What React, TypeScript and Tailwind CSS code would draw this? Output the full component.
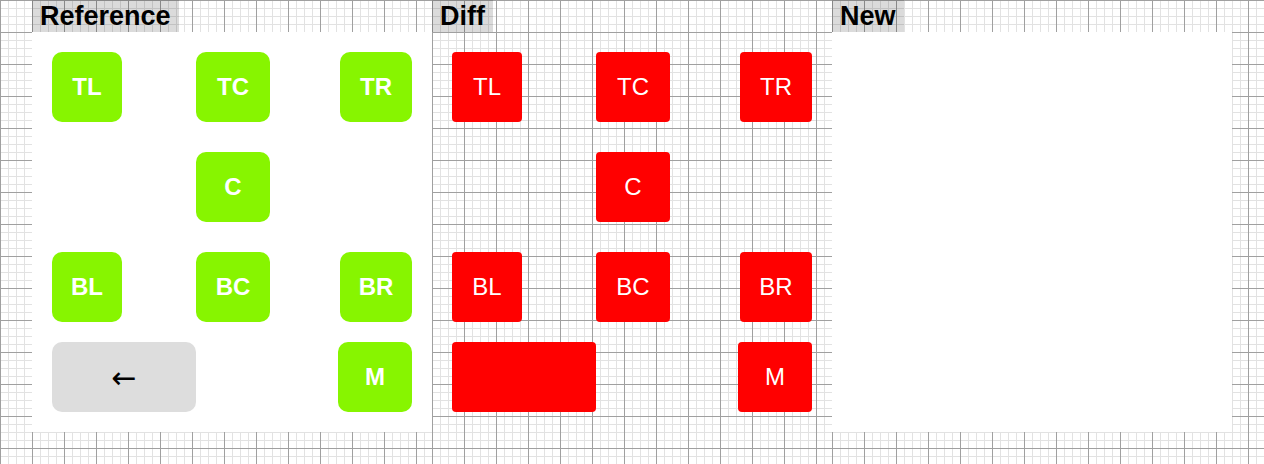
const grid =
  "bg-white bg-[linear-gradient(to_right,#a0a0a0_1px,transparent_1px),linear-gradient(to_bottom,#a0a0a0_1px,transparent_1px),linear-gradient(to_right,#e2e2e2_1px,transparent_1px),linear-gradient(to_bottom,#e2e2e2_1px,transparent_1px)] [background-size:32px_32px,32px_32px,8px_8px,8px_8px]";

type Kind = "ref" | "diff";

function Key({ label, w, ml, kind }: { label: string; w: string; ml?: string; kind: Kind }) {
  const look =
    kind === "ref"
      ? "bg-[#87f500] rounded-[10px] font-bold text-white"
      : "bg-[#ff0000] rounded-[4px] font-normal text-white";
  return (
    <div className={`${w} ${ml ?? ""} ${look} h-[70px] flex items-center justify-center text-[24px] font-['Liberation_Sans',Arial,sans-serif]`}>
      {label}
    </div>
  );
}

function Keypad({ kind }: { kind: Kind }) {
  return (
    <div className="flex flex-col p-[20px]">
      <div className="flex">
        <Key label="TL" w="w-[70px]" kind={kind} />
        <Key label="TC" w="w-[74px]" ml="ml-[74px]" kind={kind} />
        <Key label="TR" w="w-[72px]" ml="ml-[70px]" kind={kind} />
      </div>
      <div className="flex mt-[30px]">
        <Key label="C" w="w-[74px]" ml="ml-[144px]" kind={kind} />
      </div>
      <div className="flex mt-[30px]">
        <Key label="BL" w="w-[70px]" kind={kind} />
        <Key label="BC" w="w-[74px]" ml="ml-[74px]" kind={kind} />
        <Key label="BR" w="w-[72px]" ml="ml-[70px]" kind={kind} />
      </div>
      <div className="flex mt-[20px]">
        {kind === "ref" ? (
          <div className="w-[144px] h-[70px] bg-[#dddddd] rounded-[10px] flex items-center justify-center text-black text-[30px] font-['DejaVu_Sans',sans-serif]">
            ←
          </div>
        ) : (
          <div className="w-[144px] h-[70px] bg-[#ff0000] rounded-[4px]" />
        )}
        <Key label="M" w="w-[74px]" ml="ml-[142px]" kind={kind} />
      </div>
    </div>
  );
}

function Label({ text }: { text: string }) {
  return (
    <div className="h-[32px] flex">
      <div className="px-[8px] h-[32px] leading-[32px] bg-[rgba(0,0,0,0.14)] text-black font-bold text-[27px] font-['Liberation_Sans',Arial,sans-serif]">
        {text}
      </div>
    </div>
  );
}

export default function App() {
  return (
    <div className={`w-[1264px] h-[464px] overflow-hidden flex pl-[32px] ${grid}`}>
      <div className="w-[400px]">
        <Label text="Reference" />
        <div className="w-[400px] h-[400px] bg-white">
          <Keypad kind="ref" />
        </div>
      </div>
      <div className={`w-[400px] h-[464px] ${grid}`}>
        <Label text="Diff" />
        <div className="w-[400px] h-[400px]">
          <Keypad kind="diff" />
        </div>
      </div>
      <div className="w-[400px]">
        <Label text="New" />
        <div className="w-[400px] h-[400px] bg-white" />
      </div>
    </div>
  );
}
